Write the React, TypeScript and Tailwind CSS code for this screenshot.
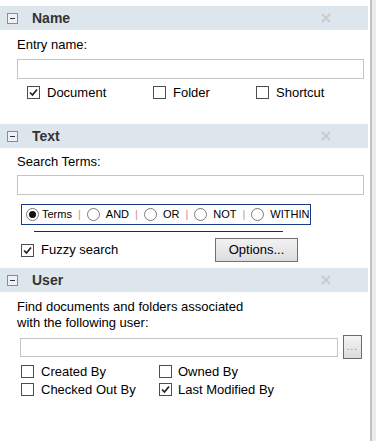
import React from "react";

// Small square check box, drawn like the classic Windows control
function CheckBox({ checked = false }: { checked?: boolean }) {
  return (
    <span className="w-[13px] h-[13px] shrink-0 border border-[#4d4d4d] bg-white flex items-center justify-center">
      {checked && (
        <svg width="9" height="9" viewBox="0 0 9 9">
          <polyline points="1,4.5 3.5,7 8,1.5" fill="none" stroke="#222" strokeWidth="1.7" />
        </svg>
      )}
    </span>
  );
}

function Radio({ checked = false }: { checked?: boolean }) {
  return (
    <span className="w-[13px] h-[13px] shrink-0 rounded-full border border-[#7a7a7a] bg-white flex items-center justify-center">
      {checked && <span className="w-[7px] h-[7px] rounded-full bg-[#111]" />}
    </span>
  );
}

// Section header bar with collapse box, bold title and a faded close cross
function SectionHeader({ title }: { title: string }) {
  return (
    <div className="h-[24px] bg-[#dde6ed] flex items-center">
      <span className="ml-[7px] w-[11px] h-[11px] border border-[#7d8ea8] bg-[#eef2f6] flex items-center justify-center">
        <span className="w-[5px] h-px bg-[#333]" />
      </span>
      <span className="ml-[14px] text-[14px] font-bold text-[#333]">{title}</span>
      <svg className="ml-auto mr-[37px]" width="10" height="10" viewBox="0 0 10 10">
        <path d="M1 1 L9 9 M9 1 L1 9" stroke="#cacaca" strokeWidth="1.8" />
      </svg>
    </div>
  );
}

const Sep = () => <span className="mx-[6px] text-[#d48a9c]">|</span>;

const searchModes = ["Terms", "AND", "OR", "NOT", "WITHIN"];

export default function App() {
  return (
    <div
      className="w-[376px] h-[441px] bg-white flex text-[13px] text-black overflow-hidden"
      style={{ fontFamily: '"Liberation Sans", Arial, sans-serif' }}
    >
      <div className="w-[368px] shrink-0 pt-[6px]">
        {/* Name */}
        <SectionHeader title="Name" />
        <div className="pl-[17px] pr-[4px]">
          <div className="mt-[7px] leading-[16px]">Entry name:</div>
          <div className="mt-[6px] h-[20px] border border-[#c4c4c4] bg-white" />
          <div className="mt-[6px] h-[15px] pl-[10px] flex items-center">
            <div className="w-[126px] flex items-center gap-[7px]">
              <CheckBox checked />
              <span>Document</span>
            </div>
            <div className="w-[103px] flex items-center gap-[7px]">
              <CheckBox />
              <span>Folder</span>
            </div>
            <div className="flex items-center gap-[7px]">
              <CheckBox />
              <span>Shortcut</span>
            </div>
          </div>
        </div>

        {/* Text */}
        <div className="mt-[24px]">
          <SectionHeader title="Text" />
        </div>
        <div className="pl-[17px] pr-[4px]">
          <div className="mt-[6px] leading-[16px]">Search Terms:</div>
          <div className="mt-[5px] h-[20px] border border-[#c4c4c4] bg-white" />
          <div className="mt-[9px] ml-[4px] w-[290px] h-[21px] border border-[#1b3a86] flex items-center pl-[4px] text-[11px]">
            {searchModes.map((m, i) => (
              <React.Fragment key={m}>
                {i > 0 && <Sep />}
                <span className="flex items-center">
                  <Radio checked={i === 0} />
                  <span className={i === 0 ? "ml-[3px]" : "ml-[6px]"}>{m}</span>
                </span>
              </React.Fragment>
            ))}
          </div>
          <div className="mt-[6px] ml-[17px] w-[249px] h-px bg-[#132c6e]" />
          <div className="mt-[6px] h-[24px] flex items-center">
            <div className="w-[198px] pl-[4px] flex items-center gap-[7px]">
              <CheckBox checked />
              <span>Fuzzy search</span>
            </div>
            <button className="w-[83px] h-[24px] border border-[#707070] bg-gradient-to-b from-[#f2f2f2] to-[#dddddd] text-[13px] text-black">
              Options...
            </button>
          </div>
        </div>

        {/* User */}
        <div className="mt-[6px]">
          <SectionHeader title="User" />
        </div>
        <div className="pl-[17px] pr-[4px]">
          <div className="mt-[7px] leading-[16px]">
            Find documents and folders associated
            <br />
            with the following user:
          </div>
          <div className="mt-[4px] h-[24px] flex items-center">
            <div className="ml-[3px] w-[318px] h-[19px] border border-[#c4c4c4] bg-white" />
            <button className="ml-[5px] w-[19px] h-[24px] border border-[#6a6a6a] bg-gradient-to-b from-[#f4f4f4] to-[#dcdcdc] flex items-end justify-center pb-[6px]">
              <span className="text-[10px] leading-none text-[#c0823c] tracking-[1px]">...</span>
            </button>
          </div>
          <div className="mt-[5px] flex flex-col gap-[3px] pl-[4px]">
            <div className="h-[15px] flex items-center">
              <div className="w-[138px] flex items-center gap-[7px]">
                <CheckBox />
                <span>Created By</span>
              </div>
              <div className="flex items-center gap-[6px]">
                <CheckBox />
                <span>Owned By</span>
              </div>
            </div>
            <div className="h-[15px] flex items-center">
              <div className="w-[138px] flex items-center gap-[7px]">
                <CheckBox />
                <span>Checked Out By</span>
              </div>
              <div className="flex items-center gap-[6px]">
                <CheckBox checked />
                <span>Last Modified By</span>
              </div>
            </div>
          </div>
        </div>
      </div>
      {/* scrollbar edge */}
      <div className="w-[2px] shrink-0" />
      <div className="w-[6px] shrink-0 border-l-2 border-[#c2c2c2] bg-[#ececec]" />
    </div>
  );
}
